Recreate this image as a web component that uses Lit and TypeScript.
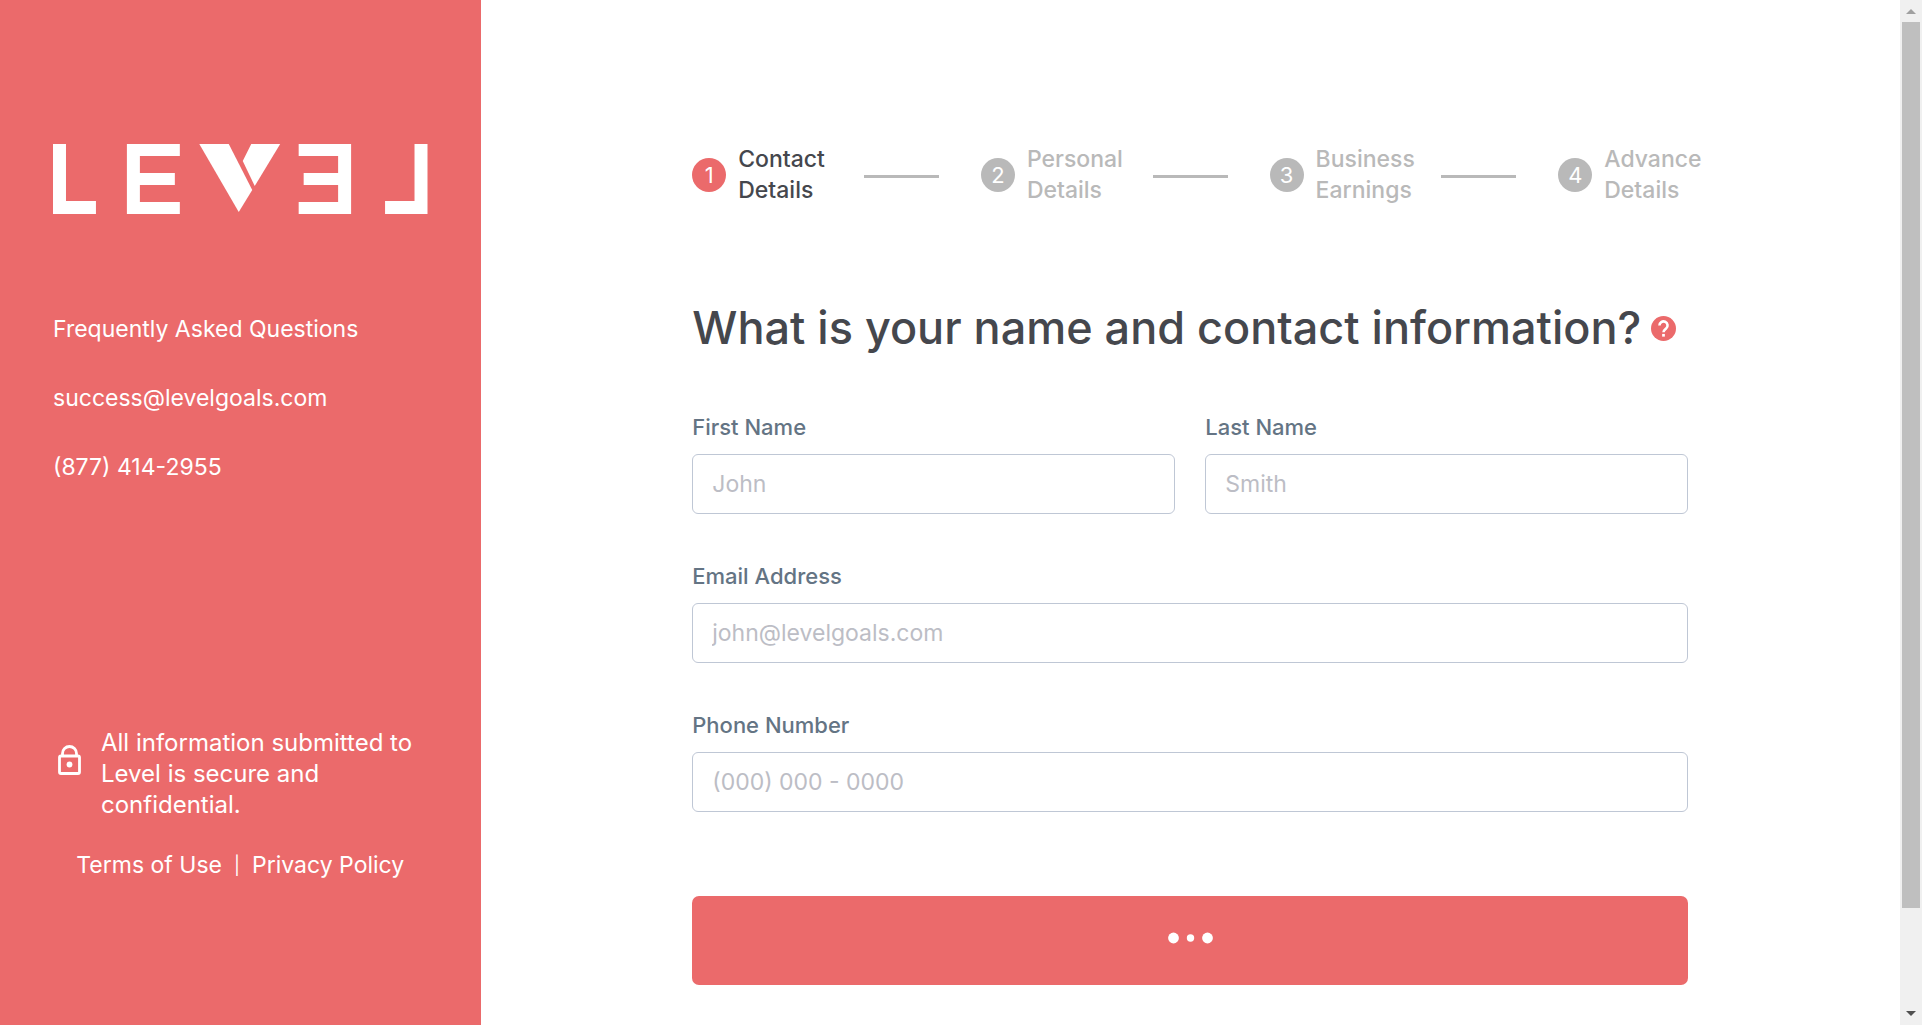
import { LitElement, html, css, svg } from "lit";
import { customElement, property } from "lit/decorators.js";
import { classMap } from "lit/directives/class-map.js";

const logo = svg`
  <svg class="logo" viewBox="0 0 375 70" role="img" aria-label="Level">
    <g fill="#fff">
      <path d="M0 0H13V57H43V70H0Z" />
      <path d="M74 0H127V12H87V29H122V41H87V58H127V70H74Z" />
      <path d="M146.5 0H176L199.5 46L186 68Z" />
      <path d="M198.5 0H227.5L202 42L190 17Z" />
      <path d="M246 0H298.500V70H246V58H285.500V41H251V29H285.500V12H246Z" />
      <path d="M362 0H375V70H332.500V57H362Z" />
    </g>
  </svg>`;

const lock = svg`
  <svg class="lock" viewBox="0 0 24 30" aria-hidden="true">
    <rect x="1.500" y="11" width="20" height="17.500" rx="1.500" fill="none" stroke="#fff" stroke-width="2.800" />
    <path d="M4.500 11V8.500a7 7 0 0 1 14 0V11" fill="none" stroke="#fff" stroke-width="2.800" />
    <circle cx="11.500" cy="19.500" r="2.900" fill="#fff" />
  </svg>`;

@customElement("level-sidebar")
class LevelSidebar extends LitElement {
  static styles = css`
    :host {
      display: flex;
      flex-direction: column;
      box-sizing: border-box;
      padding: 144px 53px;
      background: #eb6a6b;
      color: #fff;
      font-size: 23px;
      line-height: 31px;
    }
    .logo {
      display: block;
      width: 100%;
      height: auto;
    }
    .contact {
      display: flex;
      flex-direction: column;
      align-items: flex-start;
      gap: 38px;
      margin-top: 100px;
    }
    a {
      color: inherit;
      text-decoration: none;
    }
    .secure {
      display: flex;
      align-items: flex-start;
      gap: 19px;
      margin: auto 0 0;
      padding-left: 5px;
      font-size: 24px;
    }
    .lock {
      flex: none;
      width: 24px;
      height: 30px;
      margin-top: 18px;
    }
    .legal {
      display: flex;
      justify-content: center;
      gap: 12px;
      margin-top: 30px;
      white-space: nowrap;
    }
    .divider {
      font-size: 18px;
    }
  `;

  render() {
    return html`
      ${logo}
      <nav class="contact" aria-label="Help">
        <a href="#faq">Frequently Asked Questions</a>
        <a href="mailto:success@levelgoals.com">success@levelgoals.com</a>
        <a href="tel:+18774142955">(877) 414-2955</a>
      </nav>
      <p class="secure">
        ${lock}
        <span>All information submitted to Level is secure and confidential.</span>
      </p>
      <div class="legal">
        <a href="#terms">Terms of Use</a><span class="divider">|</span><a href="#privacy">Privacy Policy</a>
      </div>
    `;
  }
}

@customElement("level-steps")
class LevelSteps extends LitElement {
  @property({ type: Number }) current = 1;

  private steps = ["Contact Details", "Personal Details", "Business Earnings", "Advance Details"];

  static styles = css`
    :host {
      display: block;
      margin-right: -14px;
    }
    .steps {
      display: flex;
      margin: 0;
      padding: 0;
      list-style: none;
    }
    .step {
      display: flex;
      flex: 1 1 0;
      align-items: center;
      color: #b9b9b9;
      font-size: 23px;
      font-weight: 500;
      line-height: 31px;
    }
    .step:last-child {
      flex: 0 0 144px;
    }
    .number {
      flex: none;
      width: 34px;
      height: 34px;
      margin-right: 12px;
      border-radius: 50%;
      background: #b9b9b9;
      color: #fff;
      font-size: 22px;
      font-weight: 400;
      line-height: 34px;
      text-align: center;
    }
    .label {
      flex: 1 1 0;
      min-width: 0;
    }
    .line {
      flex: none;
      width: 75px;
      height: 3px;
      margin: 3px 42px 0 0;
      background: #b9b9b9;
    }
    .active {
      color: #45474d;
    }
    .active .number {
      background: #eb6a6b;
    }
  `;

  render() {
    return html`
      <ol class="steps">
        ${this.steps.map(
          (label, i) => html`
            <li class=${classMap({ step: true, active: i + 1 === this.current })}>
              <span class="number">${i + 1}</span>
              <span class="label">${label}</span>
              ${i < this.steps.length - 1 ? html`<span class="line"></span>` : null}
            </li>
          `
        )}
      </ol>
    `;
  }
}

interface Field {
  id: string;
  label: string;
  type: string;
  placeholder: string;
  half?: boolean;
}

const fields: Field[] = [
  { id: "first-name", label: "First Name", type: "text", placeholder: "John", half: true },
  { id: "last-name", label: "Last Name", type: "text", placeholder: "Smith", half: true },
  { id: "email", label: "Email Address", type: "email", placeholder: "john@levelgoals.com" },
  { id: "phone", label: "Phone Number", type: "tel", placeholder: "(000) 000 - 0000" },
];

@customElement("contact-form")
class ContactForm extends LitElement {
  static styles = css`
    :host {
      display: block;
    }
    .heading {
      display: flex;
      align-items: center;
      gap: 10px;
    }
    .title {
      margin: 0;
      color: #45474d;
      font-size: 45px;
      font-weight: 500;
      line-height: 54px;
    }
    .help {
      flex: none;
      width: 25px;
      height: 25px;
      margin: 0;
      padding: 0;
      border: 0;
      background: none;
      cursor: pointer;
    }
    .help-icon {
      display: block;
      width: 25px;
      height: 25px;
    }
    .fields {
      display: grid;
      grid-template-columns: 1fr 1fr;
      gap: 49px 30px;
      margin-top: 59px;
    }
    .field {
      display: flex;
      flex-direction: column;
      grid-column: 1 / -1;
      gap: 13px;
    }
    .half {
      grid-column: auto;
    }
    .label {
      color: #647484;
      font-size: 22px;
      font-weight: 500;
      line-height: 27px;
    }
    .input {
      box-sizing: border-box;
      width: 100%;
      height: 60px;
      padding: 0 19px;
      border: 1px solid #bfc7d5;
      border-radius: 6px;
      background: #fff;
      color: #45474d;
      font: inherit;
      font-size: 23px;
    }
    .input::placeholder {
      color: #bcbdc5;
      opacity: 1;
    }
    .submit {
      display: flex;
      align-items: center;
      justify-content: center;
      width: 100%;
      height: 89px;
      margin-top: 84px;
      padding: 0 0 5px;
      border: 0;
      border-radius: 7px;
      background: #eb6a6b;
      cursor: pointer;
    }
    .dots {
      width: 46px;
      height: 12px;
    }
  `;

  render() {
    return html`
      <form @submit=${(e: Event) => e.preventDefault()}>
        <div class="heading">
          <h1 class="title">What is your name and contact information?</h1>
          <button class="help" type="button" aria-label="Help">
            <svg class="help-icon" viewBox="0 0 24 24" aria-hidden="true">
              <circle cx="12" cy="12" r="12" fill="#eb6a6b" />
              <path d="M8.100 9.200a3.900 3.900 0 1 1 6.400 2.900c-1.500 1.200-2.500 1.700-2.500 3.600" fill="none" stroke="#fff" stroke-width="2.500" />
              <rect x="10.700" y="17.200" width="2.600" height="2.600" fill="#fff" />
            </svg>
          </button>
        </div>
        <div class="fields">
          ${fields.map(
            (f) => html`
              <div class=${classMap({ field: true, half: !!f.half })}>
                <label class="label" for=${f.id}>${f.label}</label>
                <input class="input" id=${f.id} name=${f.id} type=${f.type} placeholder=${f.placeholder} />
              </div>
            `
          )}
        </div>
        <button class="submit" type="submit" aria-label="Loading">
          <svg class="dots" viewBox="0 0 46 12" fill="#fff" aria-hidden="true">
            <circle cx="6.500" cy="6" r="5.400" />
            <circle cx="23.500" cy="6" r="3.700" />
            <circle cx="40.500" cy="6" r="5.400" />
          </svg>
        </button>
      </form>
    `;
  }
}

@customElement("app-root")
class AppRoot extends LitElement {
  static styles = css`
    :host {
      display: flex;
      min-height: 100vh;
      background: #fff;
      font-family: Inter, "Open Sans", sans-serif;
    }
    .sidebar {
      flex: 0 0 25%;
    }
    .main {
      flex: 1 1 0;
      min-width: 0;
      padding: 144px 40px 40px;
    }
    .content {
      max-width: 996px;
      margin: 0 auto;
    }
    .form {
      margin-top: 95px;
    }
    .scrollbar {
      display: flex;
      flex: none;
      flex-direction: column;
      align-items: center;
      width: 22px;
      background: #f0f0f0;
    }
    .arrow {
      display: block;
      flex: none;
      width: 22px;
      height: 22px;
    }
    .track {
      flex: 1;
      width: 18px;
    }
    .thumb {
      height: 90.3%;
      background: #bfbfbf;
    }
  `;

  render() {
    return html`
      <level-sidebar class="sidebar"></level-sidebar>
      <main class="main">
        <div class="content">
          <level-steps current="1"></level-steps>
          <contact-form class="form"></contact-form>
        </div>
      </main>
      <div class="scrollbar" aria-hidden="true">
        <svg class="arrow" viewBox="0 0 22 22"><path d="M6 14L11 9L16 14Z" fill="#a0a0a0" /></svg>
        <div class="track"><div class="thumb"></div></div>
        <svg class="arrow" viewBox="0 0 22 22"><path d="M6 8L11 13L16 8Z" fill="#505050" /></svg>
      </div>
    `;
  }
}
